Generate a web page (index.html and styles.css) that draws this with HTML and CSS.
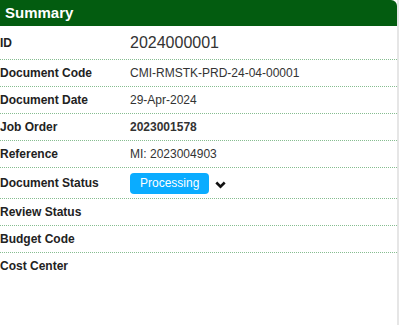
FILE: index.html
```html
<!DOCTYPE html>
<html>
<head>
   <title>Summary</title>
   <meta name="viewport" content="width=device-width, initial-scale=1">
   <link rel="stylesheet" href="styles.css">
</head>
<body>
   <div class="panel">
      <div class="panel-head">Summary</div>
      <div class="row row-id">
         <div class="label">ID</div>
         <div class="value big">2024000001</div>
      </div>
      <div class="row">
         <div class="label">Document Code</div>
         <div class="value">CMI-RMSTK-PRD-24-04-00001</div>
      </div>
      <div class="row">
         <div class="label">Document Date</div>
         <div class="value">29-Apr-2024</div>
      </div>
      <div class="row">
         <div class="label">Job Order</div>
         <div class="value strong">2023001578</div>
      </div>
      <div class="row">
         <div class="label">Reference</div>
         <div class="value">MI: 2023004903</div>
      </div>
      <div class="row row-status">
         <div class="label">Document Status</div>
         <div class="value">
            <span class="badge">Processing</span>
            <svg class="chevron" width="11" height="8" viewBox="0 0 11 8">
               <path d="M1.3 1.5 L5.5 5.7 L9.7 1.5" fill="none" stroke="#111" stroke-width="2.6"/>
            </svg>
         </div>
      </div>
      <div class="row">
         <div class="label">Review Status</div>
         <div class="value"></div>
      </div>
      <div class="row">
         <div class="label">Budget Code</div>
         <div class="value"></div>
      </div>
      <div class="row last">
         <div class="label">Cost Center</div>
         <div class="value"></div>
      </div>
   </div>
</body>
</html>
```
FILE: styles.css
```css
body {
   margin: 0;
   font-family: "Liberation Sans", Arial, sans-serif;
   background: #fff;
}
.panel {
   width: 397px;
   height: 325px;
   border-right: 2px solid #e6e6e6;
}
.panel-head {
   background-color: #035c10;
   color: #fff;
   font-weight: bold;
   font-size: 15px;
   height: 26px;
   line-height: 25px;
   padding-left: 5px;
   border-top-right-radius: 6px;
}
.row {
   display: flex;
   align-items: center;
   height: 26px;
   border-bottom: 1px dotted #86bd90;
}
.row.row-id {
   height: 33px;
}
.row.row-status {
   height: 30px;
}
.row.last {
   border-bottom: none;
}
.label {
   width: 130px;
   flex-shrink: 0;
   font-weight: bold;
   font-size: 12px;
   color: #222;
}
.value {
   display: flex;
   align-items: center;
   font-size: 12px;
   color: #333;
}
.value.big {
   font-size: 16px;
}
.value.strong {
   font-weight: bold;
}
.badge {
   background-color: #0aacff;
   color: #fff;
   font-size: 12px;
   line-height: 14px;
   padding: 3px 10px 4px;
   border-radius: 4px;
}
.chevron {
   margin-left: 6px;
   margin-top: 3px;
}
```
